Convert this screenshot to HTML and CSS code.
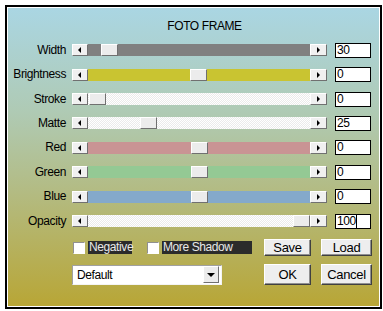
FILE: index.html
```html
<!DOCTYPE html>
<html lang="en">
<head>
    <meta charset="UTF-8">
    <meta name="viewport" content="width=device-width, initial-scale=1.0">
    <title>Foto Frame</title>
    <link rel="stylesheet" href="styles.css">
</head>
<body>

    <div class="dialog">
        <div class="panel">
            <h1 class="title">FOTO FRAME</h1>

            <div class="rows">
                <div class="row">
                    <span class="label">Width</span>
                    <div class="slider">
                        <span class="arrow left"></span>
                        <div class="track gray"><span class="thumb" style="left: 13px"></span></div>
                        <span class="arrow right"></span>
                    </div>
                    <div class="field">30</div>
                </div>
                <div class="row">
                    <span class="label">Brightness</span>
                    <div class="slider">
                        <span class="arrow left"></span>
                        <div class="track yellow"><span class="thumb" style="left: 102px"></span></div>
                        <span class="arrow right"></span>
                    </div>
                    <div class="field">0</div>
                </div>
                <div class="row">
                    <span class="label">Stroke</span>
                    <div class="slider">
                        <span class="arrow left"></span>
                        <div class="track light"><span class="thumb" style="left: 1px"></span></div>
                        <span class="arrow right"></span>
                    </div>
                    <div class="field">0</div>
                </div>
                <div class="row">
                    <span class="label">Matte</span>
                    <div class="slider">
                        <span class="arrow left"></span>
                        <div class="track light"><span class="thumb" style="left: 52px"></span></div>
                        <span class="arrow right"></span>
                    </div>
                    <div class="field">25</div>
                </div>
                <div class="row">
                    <span class="label">Red</span>
                    <div class="slider">
                        <span class="arrow left"></span>
                        <div class="track red"><span class="thumb" style="left: 103px"></span></div>
                        <span class="arrow right"></span>
                    </div>
                    <div class="field">0</div>
                </div>
                <div class="row">
                    <span class="label">Green</span>
                    <div class="slider">
                        <span class="arrow left"></span>
                        <div class="track green"><span class="thumb" style="left: 103px"></span></div>
                        <span class="arrow right"></span>
                    </div>
                    <div class="field">0</div>
                </div>
                <div class="row">
                    <span class="label">Blue</span>
                    <div class="slider">
                        <span class="arrow left"></span>
                        <div class="track blue"><span class="thumb" style="left: 103px"></span></div>
                        <span class="arrow right"></span>
                    </div>
                    <div class="field">0</div>
                </div>
                <div class="row">
                    <span class="label">Opacity</span>
                    <div class="slider">
                        <span class="arrow left"></span>
                        <div class="track light"><span class="thumb" style="left: 205px"></span></div>
                        <span class="arrow right"></span>
                    </div>
                    <div class="field"><span class="caret">100</span></div>
                </div>
            </div>

            <div class="bottom">
                <div class="options">
                    <div class="checks">
                        <span class="check">
                            <span class="box"></span>
                            <span class="check-label">Negative</span>
                        </span>
                        <span class="check">
                            <span class="box"></span>
                            <span class="check-label wide">More Shadow</span>
                        </span>
                    </div>
                    <div class="select">
                        <span class="select-text">Default</span>
                        <span class="drop"></span>
                    </div>
                </div>

                <div class="buttons">
                    <button class="btn">Save</button>
                    <button class="btn">Load</button>
                    <button class="btn">OK</button>
                    <button class="btn">Cancel</button>
                </div>
            </div>
        </div>
    </div>

</body>
</html>
```

FILE: styles.css
```css
* {
    margin: 0;
    padding: 0;
    box-sizing: border-box;
}

body {
    background-color: #fff;
    font-family: 'Liberation Sans', Arial, sans-serif;
    font-size: 12px;
    letter-spacing: -0.4px;
    color: #000;
    padding: 5px;
}

.dialog {
    width: 377px;
    height: 304px;
    border: 2px solid #000;
    background-color: #fff;
    padding: 1px;
}

.panel {
    height: 100%;
    background: linear-gradient(#aad6e3 0%, #afcab4 35%, #b3bb82 62%, #b8a636 100%);
    padding-top: 11px;
}

.title {
    font-size: 12px;
    font-weight: normal;
    line-height: 15px;
    text-align: center;
    padding-left: 22px;
    margin-bottom: 4px;
}

/* slider rows */
.row {
    display: flex;
    align-items: center;
    height: 24.43px;
}

.label {
    width: 58px;
    text-align: right;
    line-height: 15px;
}

.slider {
    display: flex;
    width: 255px;
    height: 12px;
    margin-left: 6px;
}

.arrow {
    position: relative;
    width: 16px;
    height: 12px;
    background-color: #f0f0f0;
    border: 1px solid;
    border-color: #fff #707070 #707070 #fff;
}

.arrow.right {
    width: 17px;
}

.arrow::after {
    content: '';
    position: absolute;
    top: 2px;
    left: 5px;
    border-top: 3px solid transparent;
    border-bottom: 3px solid transparent;
}

.arrow.left::after {
    border-right: 3px solid #000;
}

.arrow.right::after {
    left: 6px;
    border-left: 3px solid #000;
}

.track {
    position: relative;
    flex: 1;
}

.track.gray { background-color: #808080; }
.track.yellow { background-color: #c9c431; }
.track.red { background-color: #c99494; }
.track.green { background-color: #94c994; }
.track.blue { background-color: #84a9cb; }

.track.light {
    background: repeating-conic-gradient(#fff 0 25%, #ebebeb 0 50%) 0 0 / 2px 2px;
}

.thumb {
    position: absolute;
    top: 0;
    width: 17px;
    height: 12px;
    background-color: #ececec;
    border: 1px solid;
    border-color: #fff #707070 #707070 #fff;
}

.field {
    width: 36px;
    height: 15px;
    margin-left: 8px;
    background-color: #fff;
    border: 1px solid #000;
    padding-left: 1px;
    line-height: 13px;
}

.caret {
    border-right: 1px solid #000;
}

/* bottom controls */
.bottom {
    display: flex;
    margin-top: 6px;
    padding-left: 64px;
}

.options {
    width: 180px;
    display: flex;
    flex-direction: column;
    gap: 10px;
    padding-top: 1px;
}

.checks {
    display: flex;
    gap: 14px;
    height: 15px;
}

.check {
    display: flex;
    align-items: center;
}

.box {
    width: 12px;
    height: 12px;
    margin-left: 1px;
    margin-right: 3px;
    background-color: #fff;
    border: 1px solid;
    border-color: #909090 #fff #fff #909090;
}

.check-label {
    width: 44px;
    height: 13px;
    line-height: 13px;
    padding-left: 1px;
    background-color: #2b2b2b;
    color: #e8e8e8;
}

.check-label.wide {
    width: 90px;
}

.select {
    display: flex;
    justify-content: space-between;
    width: 150px;
    height: 20px;
    background-color: #fff;
    border: 1px solid;
    border-color: #a0a0a0 #f4f4f4 #f4f4f4 #a0a0a0;
    padding: 0 2px 1px 4px;
}

.select-text {
    line-height: 18px;
}

.drop {
    position: relative;
    width: 16px;
    height: 17px;
    background-color: #ececec;
    border: 1px solid;
    border-color: #fff #707070 #707070 #fff;
}

.drop::after {
    content: '';
    position: absolute;
    top: 6px;
    left: 3px;
    border-left: 4px solid transparent;
    border-right: 4px solid transparent;
    border-top: 4px solid #000;
}

.buttons {
    display: grid;
    grid-template-columns: 47px 51px;
    grid-template-rows: 17px 21px;
    column-gap: 10px;
    row-gap: 8px;
    margin-left: 12px;
}

.btn {
    font-family: inherit;
    font-size: 13px;
    letter-spacing: -0.3px;
    color: #000;
    background-color: #eeeeee;
    border: 1px solid;
    border-color: #fff #404040 #404040 #fff;
    box-shadow: inset -1px -1px #909090;
}
```
